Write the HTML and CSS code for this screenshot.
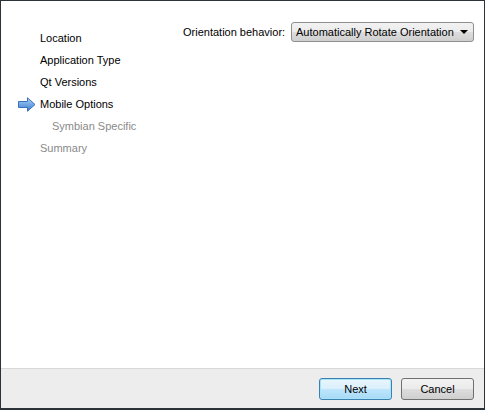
FILE: index.html
```html
<!DOCTYPE html>
<html>
<head>
<meta charset="utf-8">
<link rel="stylesheet" href="styles.css">
</head>
<body>
<div class="wizard">
  <div class="content">
    <ul class="steps">
      <li class="step done">Location</li>
      <li class="step done">Application Type</li>
      <li class="step done">Qt Versions</li>
      <li class="step current">
        <svg class="arrow" width="18" height="15" viewBox="0 0 18 15">
          <defs>
            <linearGradient id="arrowFill" x1="0" y1="0" x2="0" y2="1">
              <stop offset="0" stop-color="#b9d6f5"/>
              <stop offset="0.5" stop-color="#6fa6e6"/>
              <stop offset="1" stop-color="#3f7fd0"/>
            </linearGradient>
          </defs>
          <path d="M0.5 4.5 H9.5 V0.8 L17 7.5 L9.5 14.2 V10.5 H0.5 Z" fill="url(#arrowFill)" stroke="#3b6fb6" stroke-width="1" stroke-linejoin="round"/>
        </svg>
        Mobile Options
      </li>
      <li class="step pending sub">Symbian Specific</li>
      <li class="step pending">Summary</li>
    </ul>
    <div class="page">
      <div class="field">
        <label class="field-label">Orientation behavior:</label>
        <div class="combo">
          <span class="combo-text">Automatically Rotate Orientation</span>
          <span class="combo-caret"></span>
        </div>
      </div>
    </div>
  </div>
  <div class="footer">
    <button class="btn default">Next</button>
    <button class="btn">Cancel</button>
  </div>
</div>
</body>
</html>
```
FILE: styles.css
```css
html, body {
  margin: 0;
  padding: 0;
  background: #2b3238;
}

body {
  font-family: "Liberation Sans", "DejaVu Sans", sans-serif;
  font-size: 11px;
  color: #000;
}

.wizard {
  width: 483px;
  height: 407px;
  margin: 1px 1px 2px 1px;
  background: #fff;
  display: flex;
  flex-direction: column;
}

.content {
  flex: 1;
  display: flex;
  background: #fff;
}

.steps {
  list-style: none;
  margin: 0;
  padding: 26px 0 0 39px;
  width: 140px;
  box-sizing: border-box;
}

.step {
  height: 22px;
  line-height: 22px;
  position: relative;
  white-space: nowrap;
}

.step.pending {
  color: #8a8a8a;
}

.step.sub {
  padding-left: 12px;
}

.arrow {
  position: absolute;
  left: -22px;
  top: 4px;
}

.page {
  flex: 1;
  padding: 21px 10px 0 42px;
}

.field {
  display: flex;
  align-items: center;
  gap: 5px;
}

.field-label {
  white-space: nowrap;
  flex: 1;
}

.combo {
  width: 177px;
  height: 18px;
  border: 1px solid #8e8f8f;
  border-radius: 3px;
  background: linear-gradient(#f2f2f2, #ebebeb 50%, #dddddd 51%, #cfcfcf);
  display: flex;
  align-items: center;
  padding-left: 4px;
  flex: none;
}

.combo-text {
  flex: 1;
  white-space: nowrap;
}

.combo-caret {
  width: 0;
  height: 0;
  border-left: 4px solid transparent;
  border-right: 4px solid transparent;
  border-top: 4px solid #000;
  margin-right: 5px;
}

.footer {
  height: 39px;
  border-top: 1px solid #d8d8d8;
  background: #ededed;
  display: flex;
  justify-content: flex-end;
  align-items: center;
  gap: 9px;
  padding-right: 10px;
}

.btn {
  width: 73px;
  height: 22px;
  font-family: "Liberation Sans", sans-serif;
  font-size: 11px;
  color: #000;
  border: 1px solid #707070;
  border-radius: 3px;
  background: linear-gradient(#f2f2f2, #ebebeb 50%, #dddddd 51%, #cfcfcf);
  padding: 0;
}

.btn.default {
  border-color: #3c7fb1;
  box-shadow: inset 0 0 0 1px #a6e4fa;
  background: linear-gradient(#eaf6fd, #d9f0fc 50%, #bee6fd 51%, #a7d9f5);
}
```
